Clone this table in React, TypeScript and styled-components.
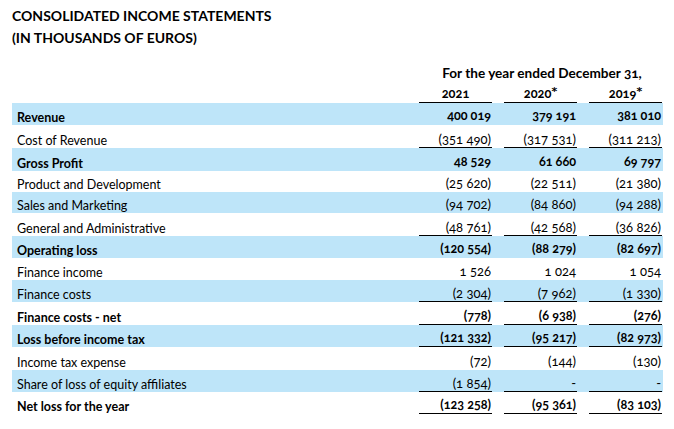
import React from "react";
import styled, { createGlobalStyle } from "styled-components";

const GlobalStyle = createGlobalStyle`
  html, body { margin: 0; padding: 0; background: #ffffff; }
  body {
    font-family: Lato, "Open Sans", "Liberation Sans", sans-serif;
    color: #000000;
  }
`;

const Page = styled.div`
  width: 674px;
  height: 429px;
  padding: 5px 0 0 12px;
  box-sizing: border-box;
  overflow: hidden;
`;

const Title = styled.h1`
  margin: 0;
  font-size: 14px;
  font-weight: 700;
  line-height: 22px;
`;

const Table = styled.div`
  margin-top: 13px;
  width: 651px;
  display: flex;
  flex-direction: column;
`;

const Grid = styled.div<{ $band?: boolean; $h?: number }>`
  display: grid;
  grid-template-columns: 395px repeat(3, 73px);
  grid-template-rows: 100%;
  column-gap: 12px;
  padding-right: 1px;
  height: ${(p) => p.$h ?? 22}px;
  background: ${(p) => (p.$band ? "#bee5f9" : "transparent")};
`;

const PeriodCaption = styled.div`
  grid-column: 2 / span 3;
  padding-left: 3px;
  text-align: center;
  font-size: 13.6px;
  font-weight: 700;
  line-height: 22px;
  font-variant-numeric: oldstyle-nums;
`;

const Year = styled.div`
  display: flex;
  align-items: flex-end;
  justify-content: center;
  padding-bottom: 2px;
  font-size: 12.8px;
  font-weight: 700;
  line-height: 14px;
  border-bottom: 1px solid #000;
  font-variant-numeric: oldstyle-nums;
`;

const Star = styled.span`
  font-family: "DejaVu Sans", sans-serif;
  font-size: 11px;
  font-weight: 700;
  position: relative;
  top: -1px;
`;

const Label = styled.div<{ $bold?: boolean }>`
  display: flex;
  align-items: flex-end;
  padding-left: 5px;
  font-size: 12.5px;
  line-height: 14px;
  font-weight: ${(p) => (p.$bold ? 700 : 400)};
  white-space: nowrap;
`;

const Value = styled.div<{ $bold?: boolean; $line?: boolean }>`
  display: flex;
  align-items: flex-end;
  justify-content: flex-end;
  padding: 0 1px 1px 0;
  font-size: ${(p) => (p.$bold ? 12.6 : 13)}px;
  line-height: 14px;
  font-weight: ${(p) => (p.$bold ? 700 : 400)};
  font-variant-numeric: oldstyle-nums;
  white-space: nowrap;
  border-bottom: 1px solid ${(p) => (p.$line ? "#000" : "transparent")};
`;

type Row = {
  label: string;
  values: [string, string, string];
  bold?: boolean;
  line?: boolean;
  h: number;
};

const rows: Row[] = [
  { label: "Revenue", values: ["400 019", "379 191", "381 010"], bold: true, h: 22 },
  { label: "Cost of Revenue", values: ["(351 490)", "(317 531)", "(311 213)"], line: true, h: 23 },
  { label: "Gross Profit", values: ["48 529", "61 660", "69 797"], bold: true, h: 23 },
  { label: "Product and Development", values: ["(25 620)", "(22 511)", "(21 380)"], h: 21 },
  { label: "Sales and Marketing", values: ["(94 702)", "(84 860)", "(94 288)"], h: 21 },
  { label: "General and Administrative", values: ["(48 761)", "(42 568)", "(36 826)"], line: true, h: 23 },
  { label: "Operating loss", values: ["(120 554)", "(88 279)", "(82 697)"], bold: true, h: 22 },
  { label: "Finance income", values: ["1 526", "1 024", "1 054"], h: 22 },
  { label: "Finance costs", values: ["(2 304)", "(7 962)", "(1 330)"], line: true, h: 22 },
  { label: "Finance costs - net", values: ["(778)", "(6 938)", "(276)"], bold: true, line: true, h: 23 },
  { label: "Loss before income tax", values: ["(121 332)", "(95 217)", "(82 973)"], bold: true, line: true, h: 22 },
  { label: "Income tax expense", values: ["(72)", "(144)", "(130)"], h: 23 },
  { label: "Share of loss of equity affiliates", values: ["(1 854)", "-", "-"], line: true, h: 22 },
  { label: "Net loss for the year", values: ["(123 258)", "(95 361)", "(83 103)"], bold: true, line: true, h: 22 },
];

const years: { y: string; star?: boolean }[] = [
  { y: "2021" },
  { y: "2020", star: true },
  { y: "2019", star: true },
];

export default function App() {
  return (
    <>
      <GlobalStyle />
      <Page>
        <Title>
          CONSOLIDATED INCOME STATEMENTS
          <br />
          (IN THOUSANDS OF EUROS)
        </Title>
        <Table>
          <Grid>
            <PeriodCaption>For the year ended December 31,</PeriodCaption>
          </Grid>
          <Grid $h={19}>
            <div />
            {years.map((y) => (
              <Year key={y.y}>
                {y.y}
                {y.star && <Star>*</Star>}
              </Year>
            ))}
          </Grid>
          {rows.map((r, i) => (
            <Grid key={r.label} $band={i % 2 === 0} $h={r.h}>
              <Label $bold={r.bold}>{r.label}</Label>
              {r.values.map((v, j) => (
                <Value key={j} $bold={r.bold} $line={r.line}>
                  {v}
                </Value>
              ))}
            </Grid>
          ))}
        </Table>
      </Page>
    </>
  );
}
